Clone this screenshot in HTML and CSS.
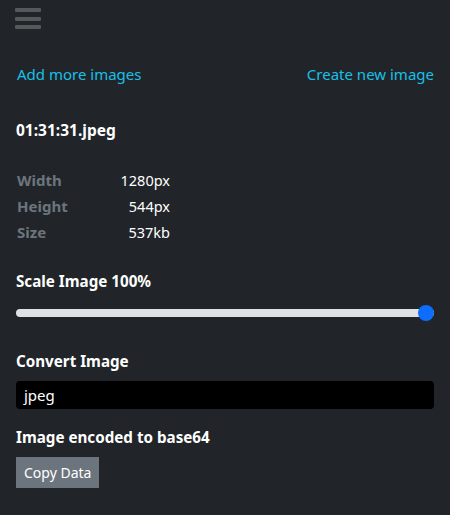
FILE: index.html
```html
<!DOCTYPE html>
<html>
<head>
<meta charset="utf-8">
<link rel="stylesheet" href="styles.css">
</head>
<body>
<div class="app">
  <div class="menu-btn" aria-label="menu">
    <span class="bar"></span><span class="bar"></span><span class="bar"></span>
  </div>
  <div class="links">
    <a class="link">Add more images</a>
    <a class="link">Create new image</a>
  </div>
  <h2 class="file-name">01:31:31.jpeg</h2>
  <table class="info">
    <tr><th>Width</th><td>1280px</td></tr>
    <tr><th>Height</th><td>544px</td></tr>
    <tr><th>Size</th><td>537kb</td></tr>
  </table>
  <label class="label">Scale Image 100%</label>
  <div class="slider">
    <div class="track"></div>
    <div class="thumb"></div>
  </div>
  <label class="label convert">Convert Image</label>
  <div class="select">jpeg</div>
  <label class="label encoded">Image encoded to base64</label>
  <button class="copy">Copy Data</button>
</div>
</body>
</html>
```
FILE: styles.css
```css
html, body {
  margin: 0;
  padding: 0;
  background: #212529;
}
body {
  font-family: "Noto Sans", "Open Sans", sans-serif;
  color: #ffffff;
  font-size: 15px;
}
.app {
  padding: 0 16px;
  height: 515px;
  box-sizing: border-box;
}
.menu-btn {
  display: flex;
  flex-direction: column;
  gap: 4.5px;
  width: 26px;
  padding-top: 8px;
  margin-left: -1px;
}
.bar {
  display: block;
  height: 4px;
  background: #56595c;
  border-radius: 1px;
}
.links {
  display: flex;
  justify-content: space-between;
  margin-top: 35px;
  margin-left: 1px;
}
.link {
  color: #17c0e8;
  font-size: 15px;
  line-height: 20px;
}
.file-name {
  margin: 36px 0 0 0;
  font-size: 15.5px;
  font-weight: 700;
  line-height: 20px;
}
.info {
  border-collapse: collapse;
  margin-top: 27px;
}
.info th {
  text-align: left;
  color: #6c757d;
  font-weight: 700;
  font-size: 15px;
  padding: 0 0 0 1px;
  width: 80px;
  height: 26px;
}
.info td {
  text-align: right;
  font-size: 14.5px;
  width: 73px;
  padding: 0;
}
.label {
  display: block;
  font-weight: 700;
  font-size: 15.2px;
  line-height: 20px;
}
.info + .label { margin-top: 26px; }
.slider {
  position: relative;
  height: 18px;
  margin-top: 13px;
}
.track {
  position: absolute;
  left: 0;
  right: 0;
  top: 5px;
  height: 8px;
  border-radius: 4px;
  background: #dee2e6;
}
.thumb {
  position: absolute;
  right: 0;
  top: 1px;
  width: 16px;
  height: 16px;
  border-radius: 50%;
  background: #0d6efd;
}
.convert { margin-top: 29px; }
.select {
  margin-top: 10px;
  height: 28px;
  line-height: 28px;
  background: #000;
  border-radius: 4px;
  padding-left: 8px;
  font-size: 15px;
}
.encoded { margin-top: 18px; }
.copy {
  margin-top: 10px;
  display: block;
  background: #6c757d;
  color: #fff;
  border: none;
  border-radius: 0;
  height: 31px;
  padding: 0 8px;
  font-family: inherit;
  font-size: 14px;
}
```
